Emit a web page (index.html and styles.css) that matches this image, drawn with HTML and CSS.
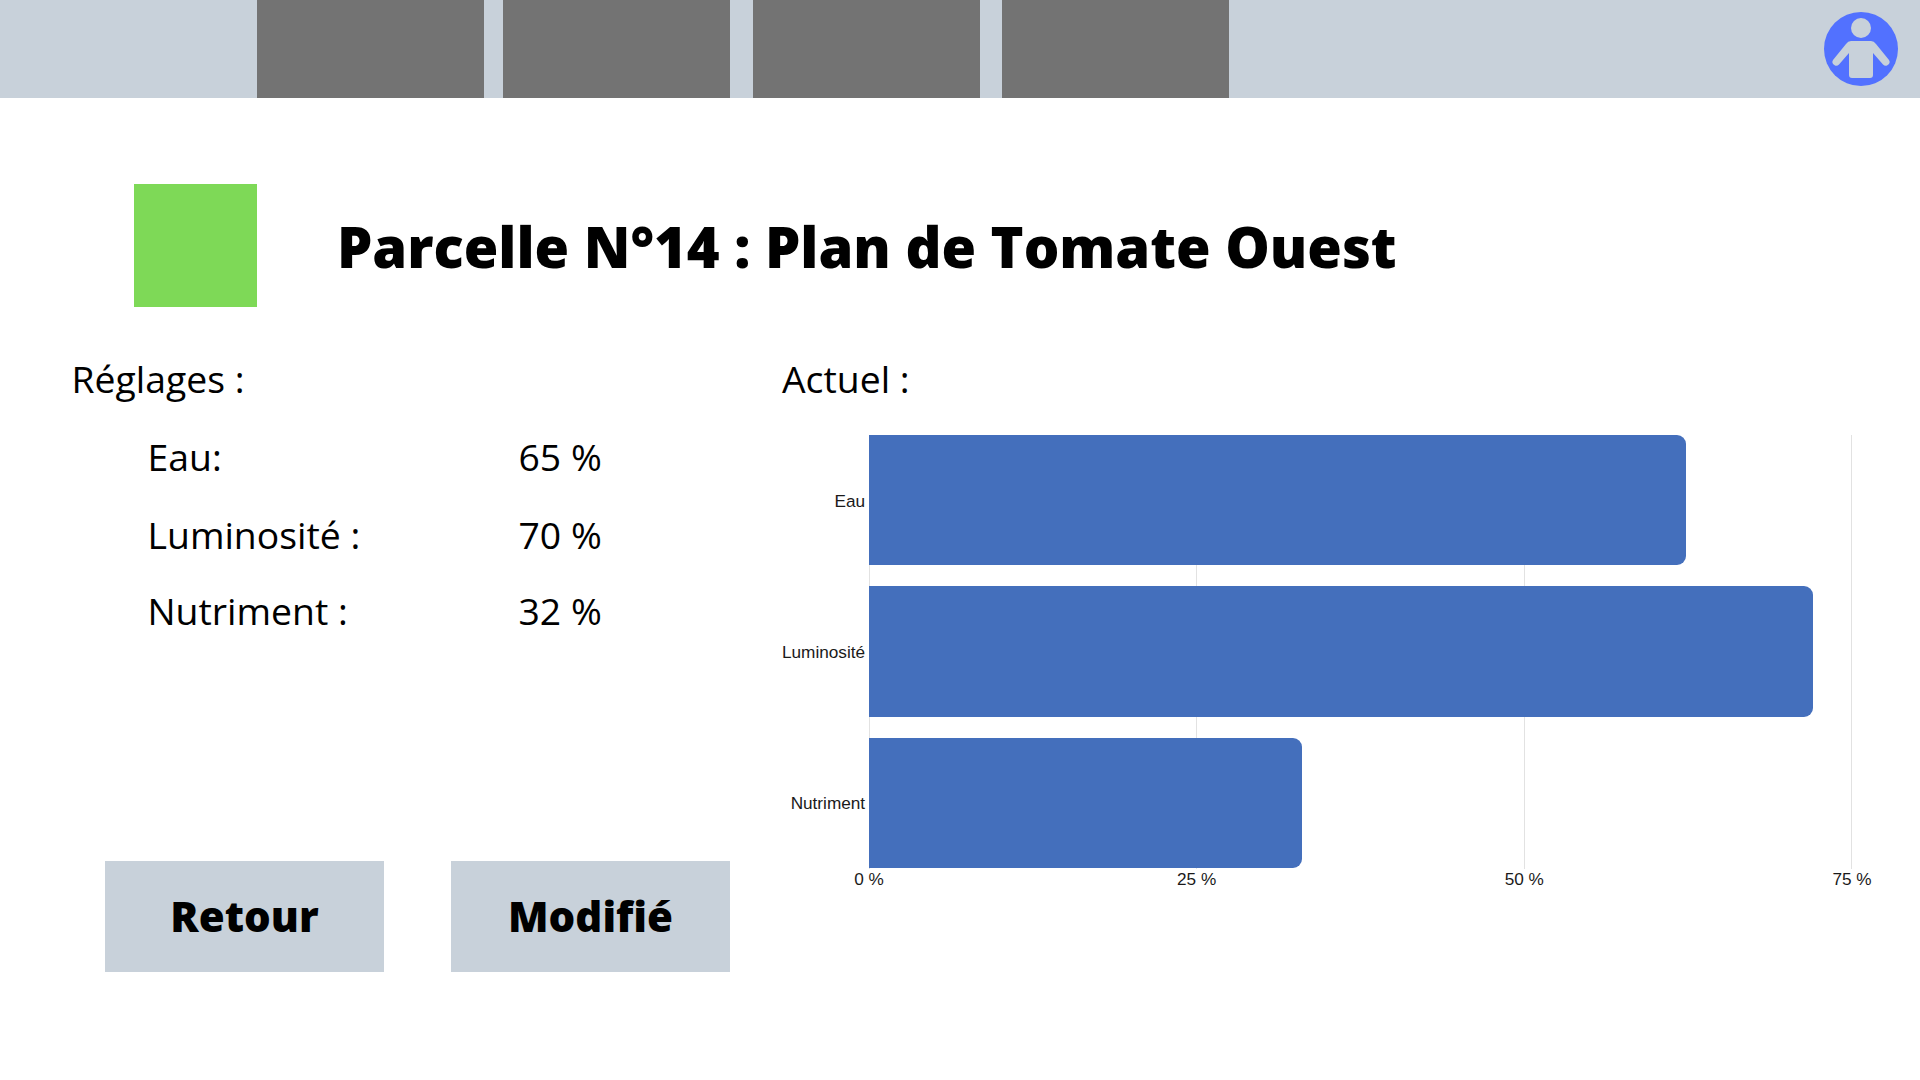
FILE: index.html
```html
<!DOCTYPE html>
<html lang="fr">
<head>
<meta charset="utf-8">
<title>Parcelle N°14</title>
<link rel="stylesheet" href="styles.css">
</head>
<body>
<header class="topbar">
  <nav class="tabs">
    <div class="tab"></div>
    <div class="tab tab-2"></div>
    <div class="tab tab-3"></div>
    <div class="tab tab-4"></div>
  </nav>
  <svg class="avatar" viewBox="0 0 74 74" aria-hidden="true">
    <circle cx="37" cy="37" r="37" fill="#5271ff"/>
    <circle cx="37" cy="16" r="10" fill="#c8d1da"/>
    <path d="M27 29 H47 Q50 29 52 32 L65 48 Q66.500 50 65 52 L63 53.500 Q61 54.500 59 52.500 L49 41 V63 Q49 66 46 66 H28 Q25 66 25 63 V41 L15 52.500 Q13 54.500 11 53.500 L9 52 Q7.500 50 9 48 L22 32 Q24 29 27 29 Z" fill="#c8d1da"/>
  </svg>
</header>

<main class="page">
  <section class="title-row">
    <div class="status"></div>
    <h1 class="title">Parcelle N°14 : Plan de Tomate Ouest</h1>
  </section>

  <section class="columns">
    <div class="settings">
      <h2 class="heading">Réglages :</h2>
      <div class="setting-list">
        <div class="setting"><span class="setting-name">Eau:</span><span>65 %</span></div>
        <div class="setting setting-mid"><span class="setting-name">Luminosité :</span><span>70 %</span></div>
        <div class="setting"><span class="setting-name">Nutriment :</span><span>32 %</span></div>
      </div>
      <div class="actions">
        <button class="btn" type="button">Retour</button>
        <button class="btn" type="button">Modifié</button>
      </div>
    </div>

    <div class="current">
      <h2 class="heading">Actuel :</h2>
      <div class="chart">
        <div class="cat-labels">
          <span>Eau</span>
          <span>Luminosité</span>
          <span>Nutriment</span>
        </div>
        <div class="plot">
          <div class="grid-lines">
            <i></i><i></i><i></i><i></i>
          </div>
          <div class="bars">
            <div class="bar" style="width:83.1%"></div>
            <div class="bar" style="width:96%"></div>
            <div class="bar" style="width:44%"></div>
          </div>
        </div>
        <div class="axis">
          <span>0 %</span><span>25 %</span><span>50 %</span><span>75 %</span>
        </div>
      </div>
    </div>
  </section>
</main>
</body>
</html>
```

FILE: styles.css
```css
* { box-sizing: border-box; }

html, body {
  margin: 0;
  height: 1080px;
  overflow: hidden;
  background: #fff;
  color: #000;
  font-family: "Open Sans", sans-serif;
}

.topbar {
  height: 98px;
  background: #c8d1da;
  display: flex;
  justify-content: space-between;
  padding: 0 22px 0 257px;
}

.tabs { display: flex; }

.tab {
  width: 227px;
  height: 98px;
  background: #737373;
}
.tab-2 { margin-left: 19px; }
.tab-3 { margin-left: 23px; }
.tab-4 { margin-left: 22px; }

.avatar {
  width: 74px;
  height: 74px;
  margin-top: 12px;
}

.title-row {
  display: flex;
  align-items: center;
  gap: 79.700px;
  margin-top: 86px;
  padding-left: 134.300px;
}

.status {
  width: 123px;
  height: 123px;
  background: #7ed957;
}

.title {
  margin: 0;
  padding-top: 3px;
  font-size: 56px;
  font-weight: 800;
  line-height: 1.2;
  white-space: nowrap;
}

.columns {
  display: flex;
  margin-top: 47px;
  padding-left: 71.500px;
}

.settings { width: 710.500px; }

.heading {
  margin: 0;
  font-size: 37.330px;
  font-weight: 400;
  line-height: 50px;
}

.setting-list {
  display: flex;
  flex-direction: column;
  gap: 27px;
  margin-top: 28px;
  padding-left: 76px;
}

.setting {
  display: flex;
  font-size: 37.330px;
  line-height: 50px;
}

.setting-mid {
  margin-top: 1px;
  margin-bottom: -1px;
}

.setting-name { width: 371px; }

.actions {
  display: flex;
  gap: 67px;
  margin-top: 225px;
  padding-left: 33.500px;
}

.btn {
  width: 279px;
  height: 111px;
  border: 0;
  padding: 0 0 2px;
  background: #c8d1da;
  color: #000;
  font-family: "Open Sans", sans-serif;
  font-size: 42px;
  font-weight: 800;
}

.current { flex: 1; }

.chart {
  display: grid;
  grid-template-columns: 83px 983px;
  grid-template-rows: 434px auto;
  column-gap: 4px;
  margin-top: 30.500px;
  font-family: "Liberation Sans", Arial, sans-serif;
  font-size: 17.200px;
  color: #1a1a1a;
}

.cat-labels {
  display: grid;
  grid-template-rows: repeat(3, 1fr);
  row-gap: 21.5px;
  justify-items: end;
  align-items: center;
  white-space: nowrap;
  padding-top: 2px;
}

.plot { position: relative; }

.grid-lines {
  position: absolute;
  inset: 0;
  display: flex;
  justify-content: space-between;
}
.grid-lines i {
  width: 1px;
  background: #e2e2e2;
}

.bars {
  position: relative;
  height: 100%;
  display: grid;
  grid-template-rows: repeat(3, 1fr);
  row-gap: 21.5px;
}

.bar {
  background: #446fbc;
  border-radius: 0 9px 9px 0;
}

.axis {
  grid-column: 2;
  display: flex;
  justify-content: space-between;
  padding-top: 0.500px;
  line-height: 20px;
}
.axis span {
  width: 0;
  display: flex;
  justify-content: center;
  white-space: nowrap;
}
```
